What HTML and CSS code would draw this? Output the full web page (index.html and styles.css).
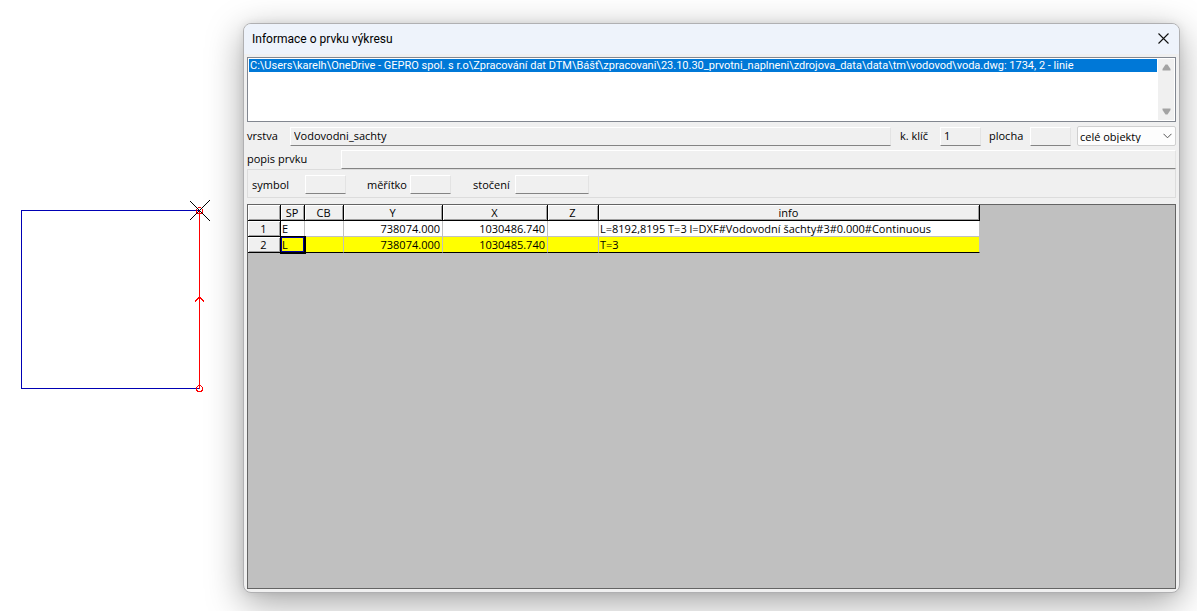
FILE: index.html
```html
<!DOCTYPE html>
<html lang="cs">
<head>
<meta charset="utf-8">
<title>Informace o prvku výkresu</title>
<link rel="stylesheet" href="styles.css">
</head>
<body>
<div class="workspace">
  <svg class="drawing" width="211" height="400" viewBox="0 0 211 400" fill="none" shape-rendering="crispEdges" aria-hidden="true">
    <path d="M199 187.5H21.500V365.500H199" stroke="#0000b4"/>
    <path d="M199.500 187V366" stroke="#f00"/>
    <path d="M195 278.500L199.500 274L204 278.500" stroke="#f00"/>
    <circle cx="199.500" cy="187.500" r="3" stroke="#f00"/>
    <circle cx="199.500" cy="365.500" r="3" stroke="#f00"/>
    <path d="M190 178L210 198M210 177L190 197" stroke="#000"/>
  </svg>
  <section class="dialog" aria-labelledby="title">
    <header class="titlebar">
      <h1 class="title" id="title">Informace o prvku výkresu</h1>
      <button class="close" type="button" aria-label="Zavřít">
        <svg width="11" height="11" viewBox="0 0 11 11"><path d="M.5 .5L10.500 10.500M10.500 .5L.5 10.500" stroke="#111" stroke-width="1.100"/></svg>
      </button>
    </header>
    <div class="content">
      <div class="list">
        <ul class="items">
          <li class="item">C:\Users\karelh\OneDrive - GEPRO spol. s r.o\Zpracování dat DTM\Bášť\zpracovani\23.10.30_prvotni_naplneni\zdrojova_data\data\tm\vodovod\voda.dwg: 1734, 2 - linie</li>
        </ul>
        <div class="scrollbar">
          <button class="scroll" type="button" aria-label="Nahoru"><svg width="9" height="7" viewBox="0 0 9 7"><path d="M3.500 .5h2L8.500 5v1.500h-8V5z" fill="#a3a3a3"/></svg></button>
          <button class="scroll" type="button" aria-label="Dolů"><svg width="9" height="7" viewBox="0 0 9 7"><path d="M.5 .5h8V2L5.500 6.500h-2L.5 2z" fill="#a3a3a3"/></svg></button>
        </div>
      </div>
      <div class="row">
        <label class="label label-layer" for="layer">vrstva</label>
        <input class="field grow" id="layer" value="Vodovodni_sachty" readonly>
        <label class="label label-key" for="key">k. klíč</label>
        <input class="field small" id="key" value="1" readonly>
        <label class="label label-area" for="area">plocha</label>
        <input class="field small" id="area" readonly>
        <div class="select-wrap">
          <select class="select" aria-label="Rozsah"><option>celé objekty</option></select>
          <svg class="chevron" width="9" height="6" viewBox="0 0 9 6"><path d="M.5 .8L4.500 4.800L8.500 .8" fill="none" stroke="#555"/></svg>
        </div>
      </div>
      <div class="row row-desc">
        <label class="label label-desc" for="desc">popis prvku</label>
        <input class="field grow" id="desc" readonly>
      </div>
      <div class="group">
        <label class="label label-symbol" for="symbol">symbol</label>
        <input class="field small" id="symbol" readonly>
        <label class="label label-scale" for="scale">měřítko</label>
        <input class="field small" id="scale" readonly>
        <label class="label label-turn" for="turn">stočení</label>
        <input class="field medium" id="turn" readonly>
      </div>
      <div class="grid">
        <table class="table">
          <colgroup><col class="c-no"><col class="c-sp"><col class="c-cb"><col class="c-y"><col class="c-x"><col class="c-z"><col class="c-info"></colgroup>
          <thead>
            <tr><th></th><th>SP</th><th>CB</th><th>Y</th><th>X</th><th>Z</th><th>info</th></tr>
          </thead>
          <tbody>
            <tr><th>1</th><td>E</td><td></td><td class="num">738074.000</td><td class="num">1030486.740</td><td></td><td>L=8192,8195 T=3 l=DXF#Vodovodní šachty#3#0.000#Continuous</td></tr>
            <tr class="current"><th>2</th><td class="active">L</td><td></td><td class="num">738074.000</td><td class="num">1030485.740</td><td></td><td>T=3</td></tr>
          </tbody>
        </table>
      </div>
    </div>
  </section>
</div>
</body>
</html>
```
FILE: styles.css
```css
* { box-sizing: border-box; }
body { margin: 0; background: #fff; color: #000; font: 11px/13px "Open Sans", Tahoma, sans-serif; }
input, select, button { font: inherit; color: inherit; margin: 0; }
button { border: 0; padding: 0; background: none; display: flex; align-items: center; justify-content: center; }

.workspace { display: grid; grid-template-columns: 243px minmax(0, 1fr); min-height: 100vh; padding: 23px 17px 18px 0; overflow: hidden; }
.drawing { display: block; }
.dialog { display: flex; flex-direction: column; border: 1px solid #b0b0b2; border-radius: 8px; background: #f0f0f0; box-shadow: 0 10px 36px rgba(0, 0, 0, .36), 0 0 8px rgba(0, 0, 0, .08); overflow: hidden; }
.titlebar { display: flex; align-items: center; justify-content: space-between; height: 30px; padding: 0 10px 0 8px; background: #eef3fb; }
.close { padding-bottom: 2px; }
.title { margin: 0; font: 12px/16px Roboto, "Segoe UI", sans-serif; }
.content { display: flex; flex: 1; flex-direction: column; padding: 3px; }

.list { display: flex; height: 65px; padding: 1px; border: 1px solid #828790; background: #fff; }
.items { flex: 1; min-width: 0; margin: 0 1px 0 0; padding: 0; list-style: none; }
.item { overflow: hidden; padding-left: 1px; background: #0078d7; color: #fff; font-family: Roboto, Tahoma, sans-serif; white-space: nowrap; }
.scrollbar { display: flex; flex-direction: column; justify-content: space-between; width: 16px; background: #f0f0f0; }
.scroll { height: 17px; }

.row { display: flex; align-items: center; height: 20px; margin-top: 4px; }
.row-desc { margin-top: 3px; }
.label { flex: none; white-space: nowrap; }
.row .label { padding-bottom: 2px; }
.label-layer { width: 43px; }
.label-key { width: 49px; padding-left: 9px; }
.label-area { width: 49px; padding-left: 8px; }
.label-desc { width: 94px; }
.label-symbol { width: 57px; padding-left: 4px; }
.label-scale { width: 64px; padding-left: 21px; }
.label-turn { width: 64px; padding-left: 22px; }
.field { height: 19px; min-width: 0; padding: 0 3px 2px; border: 1px solid #fff; border-right-color: #e3e3e3; border-bottom-color: #848484; background: #f0f0f0; outline: 0; }
.grow { flex: 1; }
.small { width: 41px; }
.medium { width: 74px; }
.select-wrap { display: grid; align-items: center; width: 99px; margin-left: 6px; }
.select { grid-area: 1 / 1; width: 99px; height: 20px; padding: 0 2px; border: 1px solid #d0d0d0; border-radius: 2px; background: #fdfdfd; appearance: none; }
.chevron { grid-area: 1 / 1; justify-self: end; margin-right: 4px; pointer-events: none; }
.group { display: flex; align-items: center; height: 29px; padding-top: 2px; border: 1px solid #dcdcdc; }

.grid { flex: 1; margin-top: 6px; border: 1px solid #646464; background: #c0c0c0; overflow: hidden; }
.table { width: 732px; table-layout: fixed; border-collapse: separate; border-spacing: 0; }
.c-no { width: 33px; }
.c-sp { width: 24px; }
.c-cb { width: 39px; }
.c-y { width: 99px; }
.c-x { width: 105px; }
.c-z { width: 51px; }
.c-info { width: 381px; }
.table th, .table td { height: 16px; padding: 1px 2px 0 1px; line-height: 14px; font-weight: 400; white-space: nowrap; }
.table th { border-right: 1px solid #000; border-bottom: 1px solid #000; background: #f0f0f0; box-shadow: inset 1px 1px #fff, inset -1px -1px #a0a0a0; text-align: center; }
.table td { border-right: 1px solid #c0c0c0; border-bottom: 1px solid #c0c0c0; background: #fff; text-align: left; }
.table .num { text-align: right; }
.table .current td { border-bottom-color: #000; background: #ff0; }
.table .current .active { outline: 1px solid #000; box-shadow: inset 0 0 0 1px #0000a0; border-right-color: #000; }
```
